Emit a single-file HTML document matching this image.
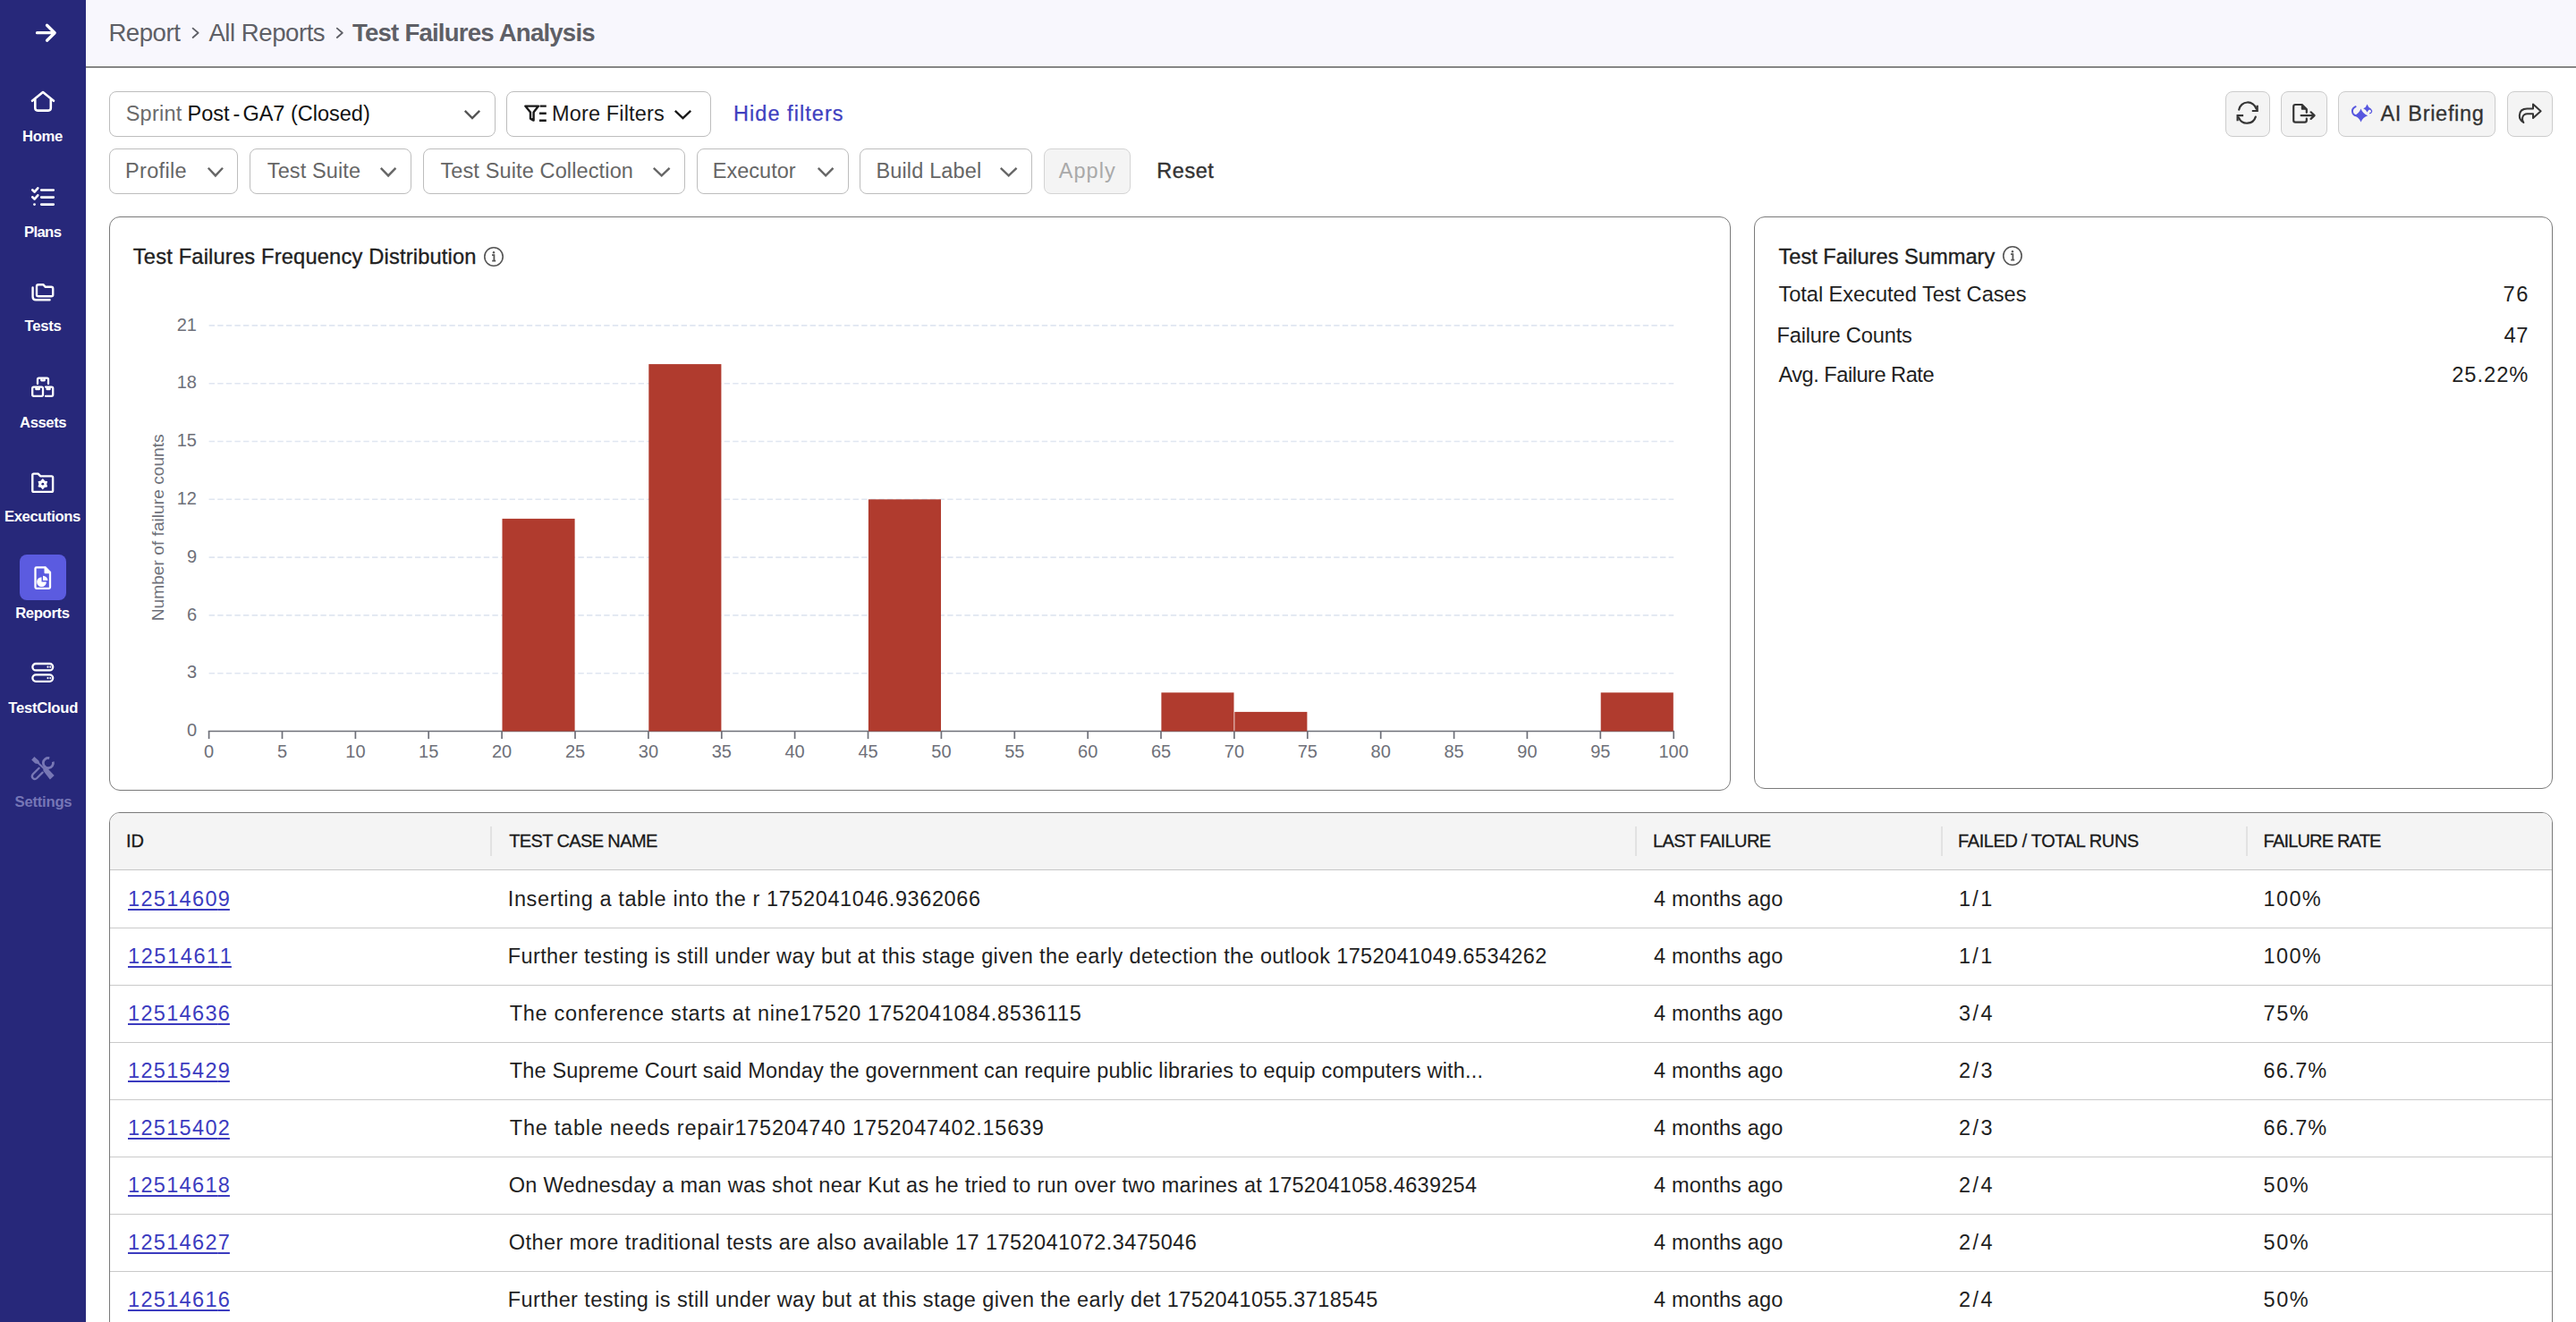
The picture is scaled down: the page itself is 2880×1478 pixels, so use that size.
<!DOCTYPE html>
<html><head><meta charset="utf-8"><style>
html,body{margin:0;padding:0;background:#fff;}
body{width:2880px;height:1478px;overflow:hidden;position:relative;font-family:"Liberation Sans", sans-serif;}
.t{position:absolute;white-space:nowrap;line-height:1;}
</style></head><body>
<div style="position:absolute;left:0;top:0;width:96px;height:1478px;background:#27287a"></div>
<div style="position:absolute;left:97px;top:0;width:2783px;height:73px;background:#f8f7fd"></div>
<div style="position:absolute;left:96px;top:74px;width:2784px;height:2px;background:#858585"></div>
<svg style="position:absolute;left:0;top:0" width="96" height="920" viewBox="0 0 96 920" fill="none" stroke="#ffffff" stroke-linecap="round" stroke-linejoin="round">
<path d="M41.5 36.7H61 M52.5 28.2L61.2 36.7L52.5 45.2" stroke-width="3.3"/>
<path d="M36 112.8L48 103L60 112.8 M39.3 110.5V120.8Q39.3 123.6 42.1 123.6H54Q56.8 123.6 56.8 120.8V110.5" stroke-width="2.6"/>
<path d="M36.2 212.3L38.6 214.6L42.3 210.3 M36.2 220.3L38.6 222.6L42.3 218.3 M46.2 212.5H59.8 M46.2 220.6H59.8 M46.2 228.6H59.8" stroke-width="2.6"/>
<circle cx="38.5" cy="228.6" r="1.4" fill="#ffffff" stroke="none"/>
<path d="M41 329.8V320.2Q41 318.2 43 318.2H48.3L50.8 320.8H57.2Q59.2 320.8 59.2 322.8V329.8Q59.2 331.2 57.2 331.2H43Q41 331.2 41 329.8Z" stroke-width="2.4"/>
<path d="M36.6 321.5V331.8Q36.6 335.3 40.1 335.3H55.6" stroke-width="2.4"/>
<path d="M42 429V424.2Q42 422.6 43.6 422.6H52.4Q54 422.6 54 424.2V429 M46.3 422.6V425.3H49.7V422.6" stroke-width="2.3"/>
<path d="M37.8 432.6H46.4Q48 432.6 48 434.2V441.2Q48 442.8 46.4 442.8H37.8Q36.2 442.8 36.2 441.2V434.2Q36.2 432.6 37.8 432.6Z M40.4 432.6V435.2H43.8V432.6" stroke-width="2.3"/>
<path d="M51 432.6H57.6Q59.2 432.6 59.2 434.2V441.2Q59.2 442.8 57.6 442.8H51 M52.6 432.6V435.2H55.6V432.6" stroke-width="2.3"/>
<path d="M36.3 548.5V531Q36.3 529.6 37.7 529.6H42.6L45.3 532.4H57.7Q59.1 532.4 59.1 533.8V548.5Q59.1 549.9 57.7 549.9H37.7Q36.3 549.9 36.3 548.5Z" stroke-width="2.4"/>
<rect x="22" y="620" width="52" height="51" rx="8" fill="#5b5be0" stroke="none"/>
<path d="M39.5 656.6V635.6Q39.5 634.3 40.8 634.3H50.6L56 639.7V656.6Q56 657.8 54.8 657.8H40.8Q39.5 657.8 39.5 656.6Z" stroke-width="2.3"/>
<path d="M50.5 634.5V640.2H56" stroke-width="2" fill="#ffffff"/>
<rect x="36.4" y="742" width="22.8" height="7.4" rx="3.7" stroke-width="2.3"/>
<rect x="36.4" y="754.4" width="22.8" height="7.4" rx="3.7" stroke-width="2.3"/>
</svg>
<svg style="position:absolute;left:0;top:0" width="96" height="920" viewBox="0 0 96 920">
<g fill="#ffffff">
<path d="M47.80 536.00L49.60 538.08L52.30 538.60L51.40 541.20L52.30 543.80L49.60 544.32L47.80 546.40L46.00 544.32L43.30 543.80L44.20 541.20L43.30 538.60L46.00 538.08Z" stroke="#ffffff" stroke-width="1.4" stroke-linejoin="round"/>
<circle cx="47.8" cy="541.2" r="3.6"/>
<circle cx="47.8" cy="541.2" r="1.4" fill="#27287a"/>
<path d="M46.5 645.2A5.4 5.4 0 1 0 51.9 650.6H46.5Z"/>
<path d="M48 643.7V649.1H53.4A5.4 5.4 0 0 0 48 643.7Z"/>
<circle cx="53.5" cy="745.7" r="1.1"/><circle cx="56.3" cy="745.7" r="1.1"/>
<circle cx="53.5" cy="758.1" r="1.1"/><circle cx="56.3" cy="758.1" r="1.1"/>
</g>
<g fill="#7878b5" stroke="none">
<path d="M35.2 849.4L38.4 846.1L43.4 850.6L44.4 853.3L50.6 859L52.9 858.8L60.7 866.9L55.9 871.6L48.4 861.8L48.3 859.8L42.2 854.1L39.3 853.6Z"/>
</g>
<g fill="none" stroke="#7878b5" stroke-width="2.3" stroke-linecap="round">
<path d="M55.2 847.6A5.6 5.6 0 1 0 59.3 851.6" stroke-width="2.8" stroke-linecap="butt"/>
<path d="M43.6 858.8L36.6 865.8Q34.9 868.3 36.9 870.2Q39 872 41.2 870L47.6 863.6"/>
</g>
</svg>
<div class="t" id="sb_home" style="top:145.31px;font-size:16.7px;color:#ffffff;font-weight:700;letter-spacing:-0.333px;left:25.00px;">Home</div>
<div class="t" id="sb_plans" style="top:251.50px;font-size:16.7px;color:#ffffff;font-weight:700;letter-spacing:-0.625px;left:26.90px;">Plans</div>
<div class="t" id="sb_tests" style="top:357.41px;font-size:16.7px;color:#ffffff;font-weight:700;letter-spacing:-0.275px;left:27.50px;">Tests</div>
<div class="t" id="sb_assets" style="top:464.50px;font-size:16.7px;color:#ffffff;font-weight:700;letter-spacing:-0.460px;left:22.10px;">Assets</div>
<div class="t" id="sb_exec" style="top:570.40px;font-size:16.7px;color:#ffffff;font-weight:700;letter-spacing:-0.422px;left:5.00px;">Executions</div>
<div class="t" id="sb_rep" style="top:677.60px;font-size:16.7px;color:#ffffff;font-weight:700;letter-spacing:-0.367px;left:17.20px;">Reports</div>
<div class="t" id="sb_tc" style="top:783.50px;font-size:16.7px;color:#ffffff;font-weight:700;letter-spacing:-0.287px;left:9.30px;">TestCloud</div>
<div class="t" id="sb_set" style="top:889.10px;font-size:16.7px;color:#7676b6;font-weight:700;letter-spacing:-0.243px;left:16.50px;">Settings</div>
<div class="t" id="bc1" style="top:23.44px;font-size:27.6px;color:#5e5f66;letter-spacing:-0.480px;left:121.40px;">Report</div>
<div class="t" id="bc2" style="top:23.44px;font-size:27.6px;color:#5e5f66;letter-spacing:-0.470px;left:233.40px;">All Reports</div>
<div class="t" id="bc3" style="top:23.44px;font-size:27.6px;color:#5e5f66;font-weight:700;letter-spacing:-0.795px;left:394.00px;">Test Failures Analysis</div>
<svg style="position:absolute;left:0;top:0" width="400" height="60" fill="none" stroke="#5e5f66" stroke-width="1.8" stroke-linecap="round" stroke-linejoin="round">
<path d="M215.6 31.6L221.6 36.8L215.6 42"/><path d="M376.8 31.6L382.8 36.8L376.8 42"/></svg>
<div style="position:absolute;left:122px;top:102px;width:432px;height:51px;box-sizing:border-box;border:1.5px solid #bdbdbd;border-radius:8px;background:#fff"></div>
<div class="t" id="f_sprint" style="top:116.23px;font-size:23.5px;color:#6b6b6b;letter-spacing:0.260px;left:140.70px;">Sprint</div>
<div class="t" id="f_sprintv" style="top:116.23px;font-size:23.5px;color:#111111;letter-spacing:-0.006px;left:209.60px;">Post<span style="margin:0 3px 0 4px">-</span>GA7 (Closed)</div>
<svg style="position:absolute;left:516px;top:119.5px" width="24" height="15.900000000000006" fill="none" stroke="#555" stroke-width="2.4" stroke-linecap="butt" stroke-linejoin="miter"><path d="M3.8 3.8L12.0 12.100000000000005L20.2 3.8"/></svg>
<div style="position:absolute;left:566px;top:102px;width:229px;height:51px;box-sizing:border-box;border:1.5px solid #bdbdbd;border-radius:8px;background:#fff"></div>
<svg style="position:absolute;left:580px;top:110px" width="40" height="32" fill="none" stroke="#1a1a1a" stroke-width="2.4" stroke-linejoin="round" stroke-linecap="round">
<path d="M7.3 8.6H22L16.6 15.6V24.6L13 22.6V15.6Z"/><path d="M23.6 8.6H30.8 M23 16.7H30.8 M23 24.8H30.8" stroke-linecap="butt"/></svg>
<div class="t" id="f_more" style="top:116.23px;font-size:23.5px;color:#1a1a1a;letter-spacing:0.155px;left:617.00px;">More Filters</div>
<svg style="position:absolute;left:750.7px;top:119.5px" width="25.0" height="15.900000000000006" fill="none" stroke="#1a1a1a" stroke-width="2.4" stroke-linecap="butt" stroke-linejoin="miter"><path d="M3.8 3.8L12.5 12.100000000000005L21.2 3.8"/></svg>
<div class="t" id="f_hide" style="top:116.23px;font-size:23.5px;color:#4040bf;letter-spacing:1.045px;left:820.00px;-webkit-text-stroke:0.25px #4040bf;">Hide filters</div>
<div style="position:absolute;left:122px;top:166px;width:144px;height:51px;box-sizing:border-box;border:1.5px solid #bdbdbd;border-radius:8px;background:#fff"></div>
<div class="t" id="f_prof" style="top:179.53px;font-size:23.5px;color:#666666;letter-spacing:0.333px;left:140.00px;">Profile</div>
<svg style="position:absolute;left:229.4px;top:183.7px" width="23.799999999999983" height="16.200000000000017" fill="none" stroke="#666666" stroke-width="2.4" stroke-linecap="butt" stroke-linejoin="miter"><path d="M3.8 3.8L11.899999999999991 12.400000000000016L19.999999999999982 3.8"/></svg>
<div style="position:absolute;left:279px;top:166px;width:181px;height:51px;box-sizing:border-box;border:1.5px solid #bdbdbd;border-radius:8px;background:#fff"></div>
<div class="t" id="f_ts" style="top:179.53px;font-size:23.5px;color:#666666;letter-spacing:0.111px;left:298.80px;">Test Suite</div>
<svg style="position:absolute;left:422.3px;top:183.7px" width="24.19999999999999" height="16.200000000000017" fill="none" stroke="#666666" stroke-width="2.4" stroke-linecap="butt" stroke-linejoin="miter"><path d="M3.8 3.8L12.099999999999994 12.400000000000016L20.399999999999988 3.8"/></svg>
<div style="position:absolute;left:473px;top:166px;width:293px;height:51px;box-sizing:border-box;border:1.5px solid #bdbdbd;border-radius:8px;background:#fff"></div>
<div class="t" id="f_tsc" style="top:179.53px;font-size:23.5px;color:#666666;letter-spacing:0.130px;left:492.40px;">Test Suite Collection</div>
<svg style="position:absolute;left:727.3px;top:183.7px" width="25.40000000000009" height="16.200000000000017" fill="none" stroke="#666666" stroke-width="2.4" stroke-linecap="butt" stroke-linejoin="miter"><path d="M3.8 3.8L12.700000000000045 12.400000000000016L21.60000000000009 3.8"/></svg>
<div style="position:absolute;left:779px;top:166px;width:170px;height:51px;box-sizing:border-box;border:1.5px solid #bdbdbd;border-radius:8px;background:#fff"></div>
<div class="t" id="f_exe" style="top:179.53px;font-size:23.5px;color:#666666;letter-spacing:0.014px;left:796.80px;">Executor</div>
<svg style="position:absolute;left:911px;top:183.7px" width="24.299999999999955" height="16.200000000000017" fill="none" stroke="#666666" stroke-width="2.4" stroke-linecap="butt" stroke-linejoin="miter"><path d="M3.8 3.8L12.149999999999977 12.400000000000016L20.499999999999954 3.8"/></svg>
<div style="position:absolute;left:961px;top:166px;width:193px;height:51px;box-sizing:border-box;border:1.5px solid #bdbdbd;border-radius:8px;background:#fff"></div>
<div class="t" id="f_bl" style="top:179.53px;font-size:23.5px;color:#666666;letter-spacing:0.160px;left:979.40px;">Build Label</div>
<svg style="position:absolute;left:1115.3px;top:183.7px" width="25.40000000000009" height="16.200000000000017" fill="none" stroke="#666666" stroke-width="2.4" stroke-linecap="butt" stroke-linejoin="miter"><path d="M3.8 3.8L12.700000000000045 12.400000000000016L21.60000000000009 3.8"/></svg>
<div style="position:absolute;left:1167px;top:166px;width:97px;height:51px;box-sizing:border-box;border:1.5px solid #d4d4d4;border-radius:8px;background:#f4f4f4"></div>
<div class="t" id="f_apply" style="top:179.53px;font-size:23.5px;color:#a9a9a9;letter-spacing:1.050px;left:1183.70px;">Apply</div>
<div class="t" id="f_reset" style="top:179.53px;font-size:23.5px;color:#333333;letter-spacing:0.525px;left:1293.30px;-webkit-text-stroke:0.4px #333;">Reset</div>
<div style="position:absolute;left:2488px;top:102px;width:50px;height:51px;box-sizing:border-box;border:1.5px solid #cccccc;border-radius:8px;background:#f4f4f4"></div>
<div style="position:absolute;left:2550px;top:102px;width:52px;height:51px;box-sizing:border-box;border:1.5px solid #cccccc;border-radius:8px;background:#f4f4f4"></div>
<div style="position:absolute;left:2614px;top:102px;width:176px;height:51px;box-sizing:border-box;border:1.5px solid #cccccc;border-radius:8px;background:#f4f4f4"></div>
<div style="position:absolute;left:2803px;top:102px;width:51px;height:51px;box-sizing:border-box;border:1.5px solid #cccccc;border-radius:8px;background:#f4f4f4"></div>
<svg style="position:absolute;left:2480px;top:100px" width="400" height="60" viewBox="2480 100 400 60" fill="none" stroke="#353535" stroke-width="2.2" stroke-linecap="round" stroke-linejoin="round">
<path d="M2503.2 122.6A10 10 0 0 1 2522.6 121.6"/>
<path d="M2523.7 117.8V124H2517.8" stroke-linecap="butt" stroke-linejoin="miter"/>
<path d="M2521.8 130.6A10 10 0 0 1 2503 131.6"/>
<path d="M2508.1 129.1H2501.6V135.3" stroke-linecap="butt" stroke-linejoin="miter"/>
<path d="M2578.8 125.8V122.2L2573.6 117H2566.3Q2564.2 117 2564.2 119.1V134.6Q2564.2 136.7 2566.3 136.7H2576.7Q2578.8 136.7 2578.8 134.6V132.6"/>
<path d="M2573.6 117.2V121.9H2578.6Z" fill="#353535" stroke-width="1.6"/>
<path d="M2572.6 129.1H2587.4 M2583.6 125.3L2587.6 129.1L2583.6 132.9"/>
<path d="M2832 116.6L2840.6 124.3L2832 132V127.3H2825.6Q2821.4 127.4 2820.2 131.2Q2819.4 134.4 2821.4 137Q2816.6 134 2816.8 129Q2817.2 121.5 2825.4 121.5H2832Z" stroke-width="2"/>
</svg>
<svg style="position:absolute;left:2620px;top:108px" width="40" height="40" viewBox="2620 108 40 40">
<g fill="#5757df">
<path d="M2639.5 121.4Q2641.6 127 2647.2 129.3Q2641.6 131.2 2639.5 136.6Q2637.4 131.2 2631.8 129.1Q2637.4 127 2639.5 121.4Z"/>
<path d="M2646.5 116.4Q2647.6 120 2651 121.5Q2647.6 122.6 2646.5 125.4Q2645.4 122.6 2642.2 121.3Q2645.4 120 2646.5 116.4Z"/>
</g>
<g fill="none" stroke="#5757df" stroke-linecap="round">
<path d="M2633.6 119.2Q2628.4 122 2630.4 126.6Q2632 129.6 2635.6 129.6" stroke-width="2"/>
<path d="M2648.6 121.6Q2652.4 122.8 2651.4 125.2Q2650.8 126.4 2649.6 126.6" stroke-width="1.3"/>
</g>
</svg>
<div class="t" id="ai" style="top:115.92px;font-size:23.5px;color:#333333;letter-spacing:0.710px;left:2661.40px;-webkit-text-stroke:0.3px #333;">AI Briefing</div>
<div style="position:absolute;left:122px;top:242px;width:1813px;height:642px;box-sizing:border-box;border:1px solid #7a7a7a;border-radius:12px"></div>
<div style="position:absolute;left:1961px;top:242px;width:893px;height:640px;box-sizing:border-box;border:1px solid #7a7a7a;border-radius:12px"></div>
<div class="t" id="c_title" style="top:276.06px;font-size:23.7px;color:#1f1f1f;letter-spacing:0.169px;left:148.80px;-webkit-text-stroke:0.35px #1f1f1f;">Test Failures Frequency Distribution</div>
<div class="t" id="s_title" style="top:275.76px;font-size:23.7px;color:#1f1f1f;letter-spacing:-0.015px;left:1988.40px;-webkit-text-stroke:0.35px #1f1f1f;">Test Failures Summary</div>
<svg style="position:absolute;left:537.7px;top:272.9px" width="28" height="28" fill="none" stroke="#555" stroke-width="1.6">
<circle cx="14" cy="14" r="10.2"/><path d="M12 12.2H14.4V18.6 M12.2 18.6H16.2" stroke-width="1.8"/><circle cx="14" cy="9.2" r="1.2" fill="#555" stroke="none"/></svg>
<svg style="position:absolute;left:2236px;top:272.4px" width="28" height="28" fill="none" stroke="#555" stroke-width="1.6">
<circle cx="14" cy="14" r="10.2"/><path d="M12 12.2H14.4V18.6 M12.2 18.6H16.2" stroke-width="1.8"/><circle cx="14" cy="9.2" r="1.2" fill="#555" stroke="none"/></svg>
<div class="t" id="s1" style="top:318.46px;font-size:23.7px;color:#1f1f1f;letter-spacing:-0.067px;left:1988.40px;">Total Executed Test Cases</div>
<div class="t" id="s1v" style="top:318.46px;font-size:23.7px;color:#1f1f1f;letter-spacing:1.500px;left:2798.50px;">76</div>
<div class="t" id="s2" style="top:363.86px;font-size:23.7px;color:#1f1f1f;letter-spacing:-0.192px;left:1986.40px;">Failure Counts</div>
<div class="t" id="s2v" style="top:363.86px;font-size:23.7px;color:#1f1f1f;letter-spacing:0.500px;left:2799.50px;">47</div>
<div class="t" id="s3" style="top:407.76px;font-size:23.7px;color:#1f1f1f;letter-spacing:-0.525px;left:1988.40px;">Avg. Failure Rate</div>
<div class="t" id="s3v" style="top:407.76px;font-size:23.7px;color:#1f1f1f;letter-spacing:0.960px;left:2741.20px;">25.22%</div>
<svg style="position:absolute;left:0;top:0" width="1960" height="900">
<line x1="233.6" y1="752.7" x2="1871.2" y2="752.7" stroke="#e0e6f1" stroke-width="1.6" stroke-dasharray="6.4 3.2"/>
<line x1="233.6" y1="687.9" x2="1871.2" y2="687.9" stroke="#e0e6f1" stroke-width="1.6" stroke-dasharray="6.4 3.2"/>
<line x1="233.6" y1="623.1" x2="1871.2" y2="623.1" stroke="#e0e6f1" stroke-width="1.6" stroke-dasharray="6.4 3.2"/>
<line x1="233.6" y1="558.3" x2="1871.2" y2="558.3" stroke="#e0e6f1" stroke-width="1.6" stroke-dasharray="6.4 3.2"/>
<line x1="233.6" y1="493.5" x2="1871.2" y2="493.5" stroke="#e0e6f1" stroke-width="1.6" stroke-dasharray="6.4 3.2"/>
<line x1="233.6" y1="428.7" x2="1871.2" y2="428.7" stroke="#e0e6f1" stroke-width="1.6" stroke-dasharray="6.4 3.2"/>
<line x1="233.6" y1="363.9" x2="1871.2" y2="363.9" stroke="#e0e6f1" stroke-width="1.6" stroke-dasharray="6.4 3.2"/>
<line x1="232.8" y1="817.5" x2="1872" y2="817.5" stroke="#6e7079" stroke-width="1.7"/>
<line x1="233.6" y1="817.5" x2="233.6" y2="826" stroke="#6e7079" stroke-width="1.7"/>
<text x="233.6" y="847" text-anchor="middle" font-family="Liberation Sans" font-size="20" fill="#6e7079">0</text>
<line x1="315.5" y1="817.5" x2="315.5" y2="826" stroke="#6e7079" stroke-width="1.7"/>
<text x="315.5" y="847" text-anchor="middle" font-family="Liberation Sans" font-size="20" fill="#6e7079">5</text>
<line x1="397.4" y1="817.5" x2="397.4" y2="826" stroke="#6e7079" stroke-width="1.7"/>
<text x="397.4" y="847" text-anchor="middle" font-family="Liberation Sans" font-size="20" fill="#6e7079">10</text>
<line x1="479.2" y1="817.5" x2="479.2" y2="826" stroke="#6e7079" stroke-width="1.7"/>
<text x="479.2" y="847" text-anchor="middle" font-family="Liberation Sans" font-size="20" fill="#6e7079">15</text>
<line x1="561.1" y1="817.5" x2="561.1" y2="826" stroke="#6e7079" stroke-width="1.7"/>
<text x="561.1" y="847" text-anchor="middle" font-family="Liberation Sans" font-size="20" fill="#6e7079">20</text>
<line x1="643.0" y1="817.5" x2="643.0" y2="826" stroke="#6e7079" stroke-width="1.7"/>
<text x="643.0" y="847" text-anchor="middle" font-family="Liberation Sans" font-size="20" fill="#6e7079">25</text>
<line x1="724.9" y1="817.5" x2="724.9" y2="826" stroke="#6e7079" stroke-width="1.7"/>
<text x="724.9" y="847" text-anchor="middle" font-family="Liberation Sans" font-size="20" fill="#6e7079">30</text>
<line x1="806.8" y1="817.5" x2="806.8" y2="826" stroke="#6e7079" stroke-width="1.7"/>
<text x="806.8" y="847" text-anchor="middle" font-family="Liberation Sans" font-size="20" fill="#6e7079">35</text>
<line x1="888.6" y1="817.5" x2="888.6" y2="826" stroke="#6e7079" stroke-width="1.7"/>
<text x="888.6" y="847" text-anchor="middle" font-family="Liberation Sans" font-size="20" fill="#6e7079">40</text>
<line x1="970.5" y1="817.5" x2="970.5" y2="826" stroke="#6e7079" stroke-width="1.7"/>
<text x="970.5" y="847" text-anchor="middle" font-family="Liberation Sans" font-size="20" fill="#6e7079">45</text>
<line x1="1052.4" y1="817.5" x2="1052.4" y2="826" stroke="#6e7079" stroke-width="1.7"/>
<text x="1052.4" y="847" text-anchor="middle" font-family="Liberation Sans" font-size="20" fill="#6e7079">50</text>
<line x1="1134.3" y1="817.5" x2="1134.3" y2="826" stroke="#6e7079" stroke-width="1.7"/>
<text x="1134.3" y="847" text-anchor="middle" font-family="Liberation Sans" font-size="20" fill="#6e7079">55</text>
<line x1="1216.2" y1="817.5" x2="1216.2" y2="826" stroke="#6e7079" stroke-width="1.7"/>
<text x="1216.2" y="847" text-anchor="middle" font-family="Liberation Sans" font-size="20" fill="#6e7079">60</text>
<line x1="1298.0" y1="817.5" x2="1298.0" y2="826" stroke="#6e7079" stroke-width="1.7"/>
<text x="1298.0" y="847" text-anchor="middle" font-family="Liberation Sans" font-size="20" fill="#6e7079">65</text>
<line x1="1379.9" y1="817.5" x2="1379.9" y2="826" stroke="#6e7079" stroke-width="1.7"/>
<text x="1379.9" y="847" text-anchor="middle" font-family="Liberation Sans" font-size="20" fill="#6e7079">70</text>
<line x1="1461.8" y1="817.5" x2="1461.8" y2="826" stroke="#6e7079" stroke-width="1.7"/>
<text x="1461.8" y="847" text-anchor="middle" font-family="Liberation Sans" font-size="20" fill="#6e7079">75</text>
<line x1="1543.7" y1="817.5" x2="1543.7" y2="826" stroke="#6e7079" stroke-width="1.7"/>
<text x="1543.7" y="847" text-anchor="middle" font-family="Liberation Sans" font-size="20" fill="#6e7079">80</text>
<line x1="1625.6" y1="817.5" x2="1625.6" y2="826" stroke="#6e7079" stroke-width="1.7"/>
<text x="1625.6" y="847" text-anchor="middle" font-family="Liberation Sans" font-size="20" fill="#6e7079">85</text>
<line x1="1707.4" y1="817.5" x2="1707.4" y2="826" stroke="#6e7079" stroke-width="1.7"/>
<text x="1707.4" y="847" text-anchor="middle" font-family="Liberation Sans" font-size="20" fill="#6e7079">90</text>
<line x1="1789.3" y1="817.5" x2="1789.3" y2="826" stroke="#6e7079" stroke-width="1.7"/>
<text x="1789.3" y="847" text-anchor="middle" font-family="Liberation Sans" font-size="20" fill="#6e7079">95</text>
<line x1="1871.2" y1="817.5" x2="1871.2" y2="826" stroke="#6e7079" stroke-width="1.7"/>
<text x="1871.2" y="847" text-anchor="middle" font-family="Liberation Sans" font-size="20" fill="#6e7079">100</text>
<rect x="561.5" y="579.9" width="81.1" height="237.6" fill="#b03b2e"/>
<rect x="725.3" y="407.1" width="81.1" height="410.4" fill="#b03b2e"/>
<rect x="970.9" y="558.3" width="81.1" height="259.2" fill="#b03b2e"/>
<rect x="1298.4" y="774.3" width="81.1" height="43.2" fill="#b03b2e"/>
<rect x="1380.3" y="795.9" width="81.1" height="21.6" fill="#b03b2e"/>
<rect x="1789.7" y="774.3" width="81.1" height="43.2" fill="#b03b2e"/>
<text x="220" y="823.1" text-anchor="end" font-family="Liberation Sans" font-size="20" fill="#6e7079">0</text>
<text x="220" y="758.3" text-anchor="end" font-family="Liberation Sans" font-size="20" fill="#6e7079">3</text>
<text x="220" y="693.5" text-anchor="end" font-family="Liberation Sans" font-size="20" fill="#6e7079">6</text>
<text x="220" y="628.7" text-anchor="end" font-family="Liberation Sans" font-size="20" fill="#6e7079">9</text>
<text x="220" y="563.9" text-anchor="end" font-family="Liberation Sans" font-size="20" fill="#6e7079">12</text>
<text x="220" y="499.1" text-anchor="end" font-family="Liberation Sans" font-size="20" fill="#6e7079">15</text>
<text x="220" y="434.3" text-anchor="end" font-family="Liberation Sans" font-size="20" fill="#6e7079">18</text>
<text x="220" y="369.5" text-anchor="end" font-family="Liberation Sans" font-size="20" fill="#6e7079">21</text>
<text transform="translate(182.5,589.8) rotate(-90)" text-anchor="middle" font-family="Liberation Sans" font-size="19.2" fill="#6e7079">Number of failure counts</text>
</svg>
<div style="position:absolute;left:122px;top:908px;width:2732px;height:600px;box-sizing:border-box;border:1px solid #7a7a7a;border-radius:12px;overflow:hidden"><div style="height:63px;background:#f4f4f4;border-bottom:1px solid #c6c6c6"></div></div>
<div style="position:absolute;left:547.7px;top:924px;width:2px;height:33px;background:#e2e2e2"></div>
<div style="position:absolute;left:1827.5px;top:924px;width:2px;height:33px;background:#e2e2e2"></div>
<div style="position:absolute;left:2169.6px;top:924px;width:2px;height:33px;background:#e2e2e2"></div>
<div style="position:absolute;left:2510.5px;top:924px;width:2px;height:33px;background:#e2e2e2"></div>
<div class="t" id="h1" style="top:930.00px;font-size:20px;color:#1a1a1a;left:141.00px;-webkit-text-stroke:0.3px #1a1a1a;">ID</div>
<div class="t" id="h2" style="top:930.00px;font-size:20px;color:#1a1a1a;letter-spacing:-0.615px;left:569.20px;-webkit-text-stroke:0.3px #1a1a1a;">TEST CASE NAME</div>
<div class="t" id="h3" style="top:930.00px;font-size:20px;color:#1a1a1a;letter-spacing:-0.591px;left:1848.00px;-webkit-text-stroke:0.3px #1a1a1a;">LAST FAILURE</div>
<div class="t" id="h4" style="top:930.00px;font-size:20px;color:#1a1a1a;letter-spacing:-0.389px;left:2189.00px;-webkit-text-stroke:0.3px #1a1a1a;">FAILED / TOTAL RUNS</div>
<div class="t" id="h5" style="top:930.00px;font-size:20px;color:#1a1a1a;letter-spacing:-0.818px;left:2530.60px;-webkit-text-stroke:0.3px #1a1a1a;">FAILURE RATE</div>
<div class="t" id="r0id" style="top:993.82px;font-size:23.5px;color:#3b3bbf;letter-spacing:1.329px;left:143.00px;"><span style="text-decoration:underline;text-decoration-thickness:2px;text-underline-offset:3px">1251460<span style="letter-spacing:0">9</span></span></div>
<div class="t" id="r0n" style="top:993.82px;font-size:23.5px;color:#1f1f1f;letter-spacing:0.604px;left:567.80px;">Inserting a table into the r 1752041046.9362066</div>
<div class="t" id="r0l" style="top:993.82px;font-size:23.5px;color:#1f1f1f;letter-spacing:0.173px;left:1849.00px;">4 months ago</div>
<div class="t" id="r0f" style="top:993.82px;font-size:23.5px;color:#1f1f1f;letter-spacing:2.300px;left:2190.00px;">1/1</div>
<div class="t" id="r0r" style="top:993.82px;font-size:23.5px;color:#1f1f1f;letter-spacing:1.333px;left:2530.60px;">100%</div>
<div style="position:absolute;left:123px;top:1037px;width:2730px;height:1px;background:#cacaca"></div>
<div class="t" id="r1id" style="top:1057.83px;font-size:23.5px;color:#3b3bbf;letter-spacing:1.614px;left:143.00px;"><span style="text-decoration:underline;text-decoration-thickness:2px;text-underline-offset:3px">1251461<span style="letter-spacing:0">1</span></span></div>
<div class="t" id="r1n" style="top:1057.83px;font-size:23.5px;color:#1f1f1f;letter-spacing:0.376px;left:567.80px;">Further testing is still under way but at this stage given the early detection the outlook 1752041049.6534262</div>
<div class="t" id="r1l" style="top:1057.83px;font-size:23.5px;color:#1f1f1f;letter-spacing:0.173px;left:1849.00px;">4 months ago</div>
<div class="t" id="r1f" style="top:1057.83px;font-size:23.5px;color:#1f1f1f;letter-spacing:2.300px;left:2190.00px;">1/1</div>
<div class="t" id="r1r" style="top:1057.83px;font-size:23.5px;color:#1f1f1f;letter-spacing:1.333px;left:2530.60px;">100%</div>
<div style="position:absolute;left:123px;top:1101px;width:2730px;height:1px;background:#cacaca"></div>
<div class="t" id="r2id" style="top:1121.83px;font-size:23.5px;color:#3b3bbf;letter-spacing:1.329px;left:143.00px;"><span style="text-decoration:underline;text-decoration-thickness:2px;text-underline-offset:3px">1251463<span style="letter-spacing:0">6</span></span></div>
<div class="t" id="r2n" style="top:1121.83px;font-size:23.5px;color:#1f1f1f;letter-spacing:0.688px;left:569.80px;">The conference starts at nine17520 1752041084.8536115</div>
<div class="t" id="r2l" style="top:1121.83px;font-size:23.5px;color:#1f1f1f;letter-spacing:0.173px;left:1849.00px;">4 months ago</div>
<div class="t" id="r2f" style="top:1121.83px;font-size:23.5px;color:#1f1f1f;letter-spacing:2.500px;left:2190.00px;">3/4</div>
<div class="t" id="r2r" style="top:1121.83px;font-size:23.5px;color:#1f1f1f;letter-spacing:1.500px;left:2530.60px;">75%</div>
<div style="position:absolute;left:123px;top:1165px;width:2730px;height:1px;background:#cacaca"></div>
<div class="t" id="r3id" style="top:1185.83px;font-size:23.5px;color:#3b3bbf;letter-spacing:1.329px;left:143.00px;"><span style="text-decoration:underline;text-decoration-thickness:2px;text-underline-offset:3px">1251542<span style="letter-spacing:0">9</span></span></div>
<div class="t" id="r3n" style="top:1185.83px;font-size:23.5px;color:#1f1f1f;letter-spacing:0.172px;left:569.80px;">The Supreme Court said Monday the government can require public libraries to equip computers with...</div>
<div class="t" id="r3l" style="top:1185.83px;font-size:23.5px;color:#1f1f1f;letter-spacing:0.173px;left:1849.00px;">4 months ago</div>
<div class="t" id="r3f" style="top:1185.83px;font-size:23.5px;color:#1f1f1f;letter-spacing:2.500px;left:2190.00px;">2/3</div>
<div class="t" id="r3r" style="top:1185.83px;font-size:23.5px;color:#1f1f1f;letter-spacing:1.000px;left:2530.60px;">66.7%</div>
<div style="position:absolute;left:123px;top:1229px;width:2730px;height:1px;background:#cacaca"></div>
<div class="t" id="r4id" style="top:1249.83px;font-size:23.5px;color:#3b3bbf;letter-spacing:1.329px;left:143.00px;"><span style="text-decoration:underline;text-decoration-thickness:2px;text-underline-offset:3px">1251540<span style="letter-spacing:0">2</span></span></div>
<div class="t" id="r4n" style="top:1249.83px;font-size:23.5px;color:#1f1f1f;letter-spacing:0.749px;left:569.80px;">The table needs repair175204740 1752047402.15639</div>
<div class="t" id="r4l" style="top:1249.83px;font-size:23.5px;color:#1f1f1f;letter-spacing:0.173px;left:1849.00px;">4 months ago</div>
<div class="t" id="r4f" style="top:1249.83px;font-size:23.5px;color:#1f1f1f;letter-spacing:2.500px;left:2190.00px;">2/3</div>
<div class="t" id="r4r" style="top:1249.83px;font-size:23.5px;color:#1f1f1f;letter-spacing:1.000px;left:2530.60px;">66.7%</div>
<div style="position:absolute;left:123px;top:1293px;width:2730px;height:1px;background:#cacaca"></div>
<div class="t" id="r5id" style="top:1313.83px;font-size:23.5px;color:#3b3bbf;letter-spacing:1.329px;left:143.00px;"><span style="text-decoration:underline;text-decoration-thickness:2px;text-underline-offset:3px">1251461<span style="letter-spacing:0">8</span></span></div>
<div class="t" id="r5n" style="top:1313.83px;font-size:23.5px;color:#1f1f1f;letter-spacing:0.263px;left:568.80px;">On Wednesday a man was shot near Kut as he tried to run over two marines at 1752041058.4639254</div>
<div class="t" id="r5l" style="top:1313.83px;font-size:23.5px;color:#1f1f1f;letter-spacing:0.173px;left:1849.00px;">4 months ago</div>
<div class="t" id="r5f" style="top:1313.83px;font-size:23.5px;color:#1f1f1f;letter-spacing:2.500px;left:2190.00px;">2/4</div>
<div class="t" id="r5r" style="top:1313.83px;font-size:23.5px;color:#1f1f1f;letter-spacing:1.500px;left:2530.60px;">50%</div>
<div style="position:absolute;left:123px;top:1357px;width:2730px;height:1px;background:#cacaca"></div>
<div class="t" id="r6id" style="top:1377.83px;font-size:23.5px;color:#3b3bbf;letter-spacing:1.329px;left:143.00px;"><span style="text-decoration:underline;text-decoration-thickness:2px;text-underline-offset:3px">1251462<span style="letter-spacing:0">7</span></span></div>
<div class="t" id="r6n" style="top:1377.83px;font-size:23.5px;color:#1f1f1f;letter-spacing:0.415px;left:568.80px;">Other more traditional tests are also available 17 1752041072.3475046</div>
<div class="t" id="r6l" style="top:1377.83px;font-size:23.5px;color:#1f1f1f;letter-spacing:0.173px;left:1849.00px;">4 months ago</div>
<div class="t" id="r6f" style="top:1377.83px;font-size:23.5px;color:#1f1f1f;letter-spacing:2.500px;left:2190.00px;">2/4</div>
<div class="t" id="r6r" style="top:1377.83px;font-size:23.5px;color:#1f1f1f;letter-spacing:1.500px;left:2530.60px;">50%</div>
<div style="position:absolute;left:123px;top:1421px;width:2730px;height:1px;background:#cacaca"></div>
<div class="t" id="r7id" style="top:1441.83px;font-size:23.5px;color:#3b3bbf;letter-spacing:1.329px;left:143.00px;"><span style="text-decoration:underline;text-decoration-thickness:2px;text-underline-offset:3px">1251461<span style="letter-spacing:0">6</span></span></div>
<div class="t" id="r7n" style="top:1441.83px;font-size:23.5px;color:#1f1f1f;letter-spacing:0.397px;left:567.80px;">Further testing is still under way but at this stage given the early det 1752041055.3718545</div>
<div class="t" id="r7l" style="top:1441.83px;font-size:23.5px;color:#1f1f1f;letter-spacing:0.173px;left:1849.00px;">4 months ago</div>
<div class="t" id="r7f" style="top:1441.83px;font-size:23.5px;color:#1f1f1f;letter-spacing:2.500px;left:2190.00px;">2/4</div>
<div class="t" id="r7r" style="top:1441.83px;font-size:23.5px;color:#1f1f1f;letter-spacing:1.500px;left:2530.60px;">50%</div>
</body></html>
